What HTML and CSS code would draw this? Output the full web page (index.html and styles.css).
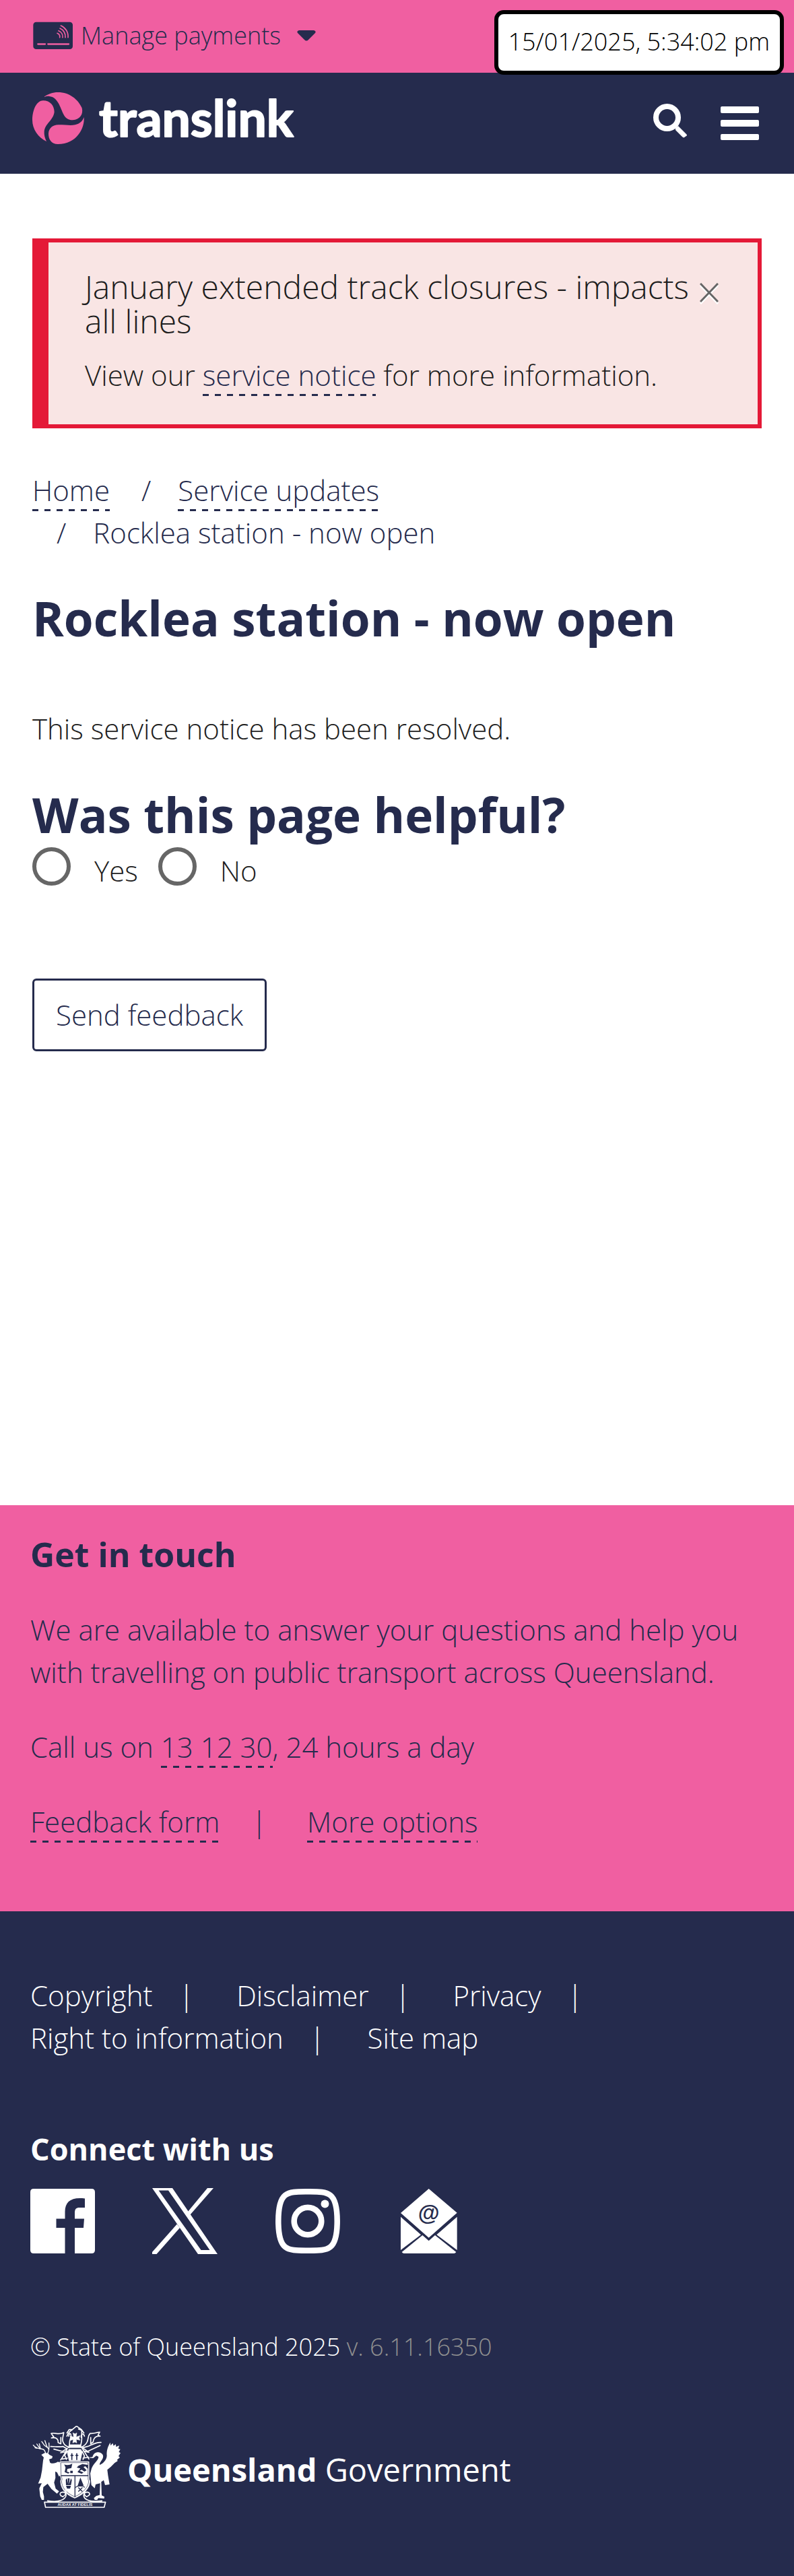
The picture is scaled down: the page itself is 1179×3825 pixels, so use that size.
FILE: index.html
```
<!DOCTYPE html>
<html lang="en">
<head>
<meta charset="utf-8">
<meta name="viewport" content="width=device-width, initial-scale=1">
<title>Rocklea station - now open | Translink</title>
<link rel="stylesheet" href="styles.css">
</head>
<body>
<div class="topbar">
  <button class="payments" type="button">
    <svg width="60" height="42" viewBox="24 28 180 122" aria-hidden="true">
      <rect class="navy" x="28" y="28" width="176" height="121" rx="13"/>
      <g class="pink-line" stroke-width="7"><path d="M49 126.500H81M94 126.500H186"/></g>
      <g class="pink-line" stroke-width="5">
        <path d="M151 44C172 53 185 73 183 97M147 56C163 63 173 79 171 97M141 67C153 72 161 84 159 97M135 78C142 81 148 88 146 97"/>
      </g>
    </svg>
    <span>Manage payments</span>
    <svg class="caret" width="28" height="16" viewBox="0 0 28 16" aria-hidden="true">
      <path class="navy" d="M3 0H25Q29 1 27 4L17 14Q14 17 11 14L1 4Q-1 1 3 0Z"/>
    </svg>
  </button>
</div>
<time class="stamp" datetime="2025-01-15T17:34:02">15/01/2025, 5:34:02 pm</time>

<header class="header">
  <a class="logo" href="#" aria-label="Translink home">
    <svg width="400" height="82" viewBox="0 0 400 82">
      <g class="pink" transform="scale(.3333) translate(-24 -20)">
        <path d="M78 39C95 28 115 20 138 20C190 20 228 52 245 90C252 118 236 143 204 144C184 144 170 133 163 118C148 88 138 42 100 38C92 37 84 38 78 41Z"/>
        <path d="M72 57C104 57 122 80 122 108C118 145 80 160 77 195C76 210 80 225 87 239C50 222 24 185 24 143C25 95 45 57 72 57Z"/>
        <path d="M254 131C258 180 222 251 138 251C108 251 96 228 96 205C97 180 115 165 140 165C175 165 195 170 215 165C235 160 248 148 254 131Z"/>
      </g>
      <text class="wordmark" x="99" y="66">translink</text>
    </svg>
  </a>
  <div class="tools">
    <button class="icon-button" type="button" aria-label="Search">
      <svg width="52" height="58" viewBox="0 0 52 58">
        <circle cx="20.500" cy="20.500" r="16.500" fill="none" stroke="#fff" stroke-width="8"/>
        <path d="M37 33L49 45Q51 47 49 48L46 50Q45 51 43 49L33 39V36Z" fill="#fff"/>
      </svg>
    </button>
    <button class="icon-button" type="button" aria-label="Menu">
      <svg width="58" height="58" viewBox="0 0 58 58" fill="#fff">
        <rect x="1" y="4" width="57" height="10" rx="2"/>
        <rect x="1" y="24" width="57" height="10" rx="2"/>
        <rect x="1" y="45" width="57" height="9" rx="2"/>
      </svg>
    </button>
  </div>
</header>

<main class="main">
  <section class="alert">
    <div class="alert-text">
      <h2 class="alert-title">January extended track closures - impacts all lines</h2>
      <p>View our <a class="link" href="#">service notice</a> for more information.</p>
    </div>
    <button class="close" type="button" aria-label="Close">
      <svg width="28" height="32" viewBox="0 0 28 32" fill="none" stroke-width="3">
        <path d="M1 4L27 31M27 4L1 31" stroke="#fff"/>
        <path d="M1 1L27 28M27 1L1 28" stroke="#666"/>
      </svg>
    </button>
  </section>

  <nav aria-label="Breadcrumb">
    <ol class="crumbs">
      <li><a class="link" href="#">Home</a></li>
      <li><a class="link" href="#">Service updates</a></li>
      <li>Rocklea station - now open</li>
    </ol>
  </nav>

  <h1 class="title">Rocklea station - now open</h1>
  <p class="notice">This service notice has been resolved.</p>

  <form>
    <h2 class="title" id="helpful">Was this page helpful?</h2>
    <div class="choices" role="radiogroup" aria-labelledby="helpful">
      <input type="radio" name="helpful" id="yes"><label for="yes">Yes</label>
      <input type="radio" name="helpful" id="no"><label for="no">No</label>
    </div>
    <button class="send" type="button">Send feedback</button>
  </form>
</main>

<footer>
  <section class="contact">
    <h3 class="contact-title">Get in touch</h3>
    <p>We are available to answer your questions and help you with travelling on public transport across Queensland.</p>
    <p>Call us on <a class="link" href="#">13 12 30</a>, 24 hours a day</p>
    <ul class="contact-links">
      <li><a class="link" href="#">Feedback form</a></li>
      <li><a class="link" href="#">More options</a></li>
    </ul>
  </section>
  <section class="legal">
    <ul class="legal-links">
      <li><a href="#">Copyright</a></li>
      <li><a href="#">Disclaimer</a></li>
      <li><a href="#">Privacy</a></li>
      <li><a href="#">Right to information</a></li>
      <li><a href="#">Site map</a></li>
    </ul>
    <h3 class="connect-title">Connect with us</h3>
    <div class="social">
      <a href="#" aria-label="Facebook">
        <svg width="96" height="98" viewBox="0 -1 96 98" fill="#fff">
          <path d="M5 0H91Q96 0 96 5V91Q96 96 91 96H66V58H79L80 44.500H66V36C66 30 68 28 73 28H81V14.500C61 12 51.500 19 51.500 34V44.500H38.500V58H51.500V96H5Q0 96 0 91V5Q0 0 5 0Z"/>
        </svg>
      </a>
      <a href="#" aria-label="X">
        <svg width="98" height="98" viewBox="0 0 98 98" fill="#fff">
          <path fill-rule="evenodd" d="M0 0H30L97 98H68ZM9.600 3.500H24L85.500 92H72.500Z"/>
          <path d="M82 0H91L56 40L53 35ZM36.800 53.500L41 59L6.500 98H0V95Z"/>
        </svg>
      </a>
      <a href="#" aria-label="Instagram">
        <svg width="96" height="98" viewBox="0 -1 96 98" fill="none" stroke="#fff" stroke-width="8.500">
          <path d="M48 4.300C78 4.300 91.700 3 91.700 48C91.700 93 78 91.700 48 91.700C18 91.700 4.300 93 4.300 48C4.300 3 18 4.300 48 4.300Z"/>
          <circle cx="48" cy="48" r="20.300"/>
          <circle cx="73.500" cy="22.500" r="6" fill="#fff" stroke="none"/>
        </svg>
      </a>
      <a href="#" aria-label="Email">
        <svg width="96" height="98" viewBox="0 27 288 294" fill="#fff">
          <path d="M140 30L266 137L140 248L15 138ZM15 155L105 235L15 303ZM266 155V303L175 235ZM20 312L112 237L140 262L168 237L262 312Q258 318 252 318H30Q24 318 20 312Z"/>
          <text class="at" x="140" y="170">@</text>
        </svg>
      </a>
    </div>
    <p class="copyright">© State of Queensland 2025 <span>v. 6.11.16350</span></p>
    <a class="gov" href="#">
      <svg width="135" height="123" viewBox="15 36 405 369" fill="none" stroke="#fff" stroke-width="4" stroke-linejoin="round" stroke-linecap="round" aria-hidden="true">
        <path fill="#fff" stroke="none" d="M76 158C84 155 96 157 100 165L114 172L112 181L99 185L103 200C112 206 128 204 138 196L148 200L152 252L143 262L134 243L126 240L127 268L121 289L128 316L143 328L134 338L109 317L92 294L73 309L71 331L76 350V366H66L59 350L55 315L66 292L50 293L61 266L67 235L72 190L75 177L64 165Z"/>
        <path d="M84 160C78 142 77 140 58 138C44 136 34 130 28 122M58 138L44 117M60 138L55 116M45 136L36 134M92 160C100 144 100 132 98 112M98 142L88 126M90 132L77 122L66 106M88 126L80 102"/>
        <path fill="#fff" stroke="none" d="M292 175C296 160 305 153 320 154C336 157 343 168 338 180C332 194 323 200 324 210C337 205 354 190 356 170C354 145 360 130 371 110L373 124L382 113L386 125L396 118L397 130L411 124L407 138L416 140L409 153L417 157L408 171L414 177L402 187L404 193L391 201L374 218L358 232L361 256L368 297L348 300L342 278L331 286L333 346L345 352L344 360L318 358L313 366H302L298 358L309 348L324 344L326 292L306 297L302 314L287 300L282 248L288 226C296 203 318 192 319 174L309 169L295 180L270 178Z"/>
        <path stroke-width="5" d="M108 70C125 65 142 78 164 66C162 82 156 94 160 106C165 120 172 125 188 132M108 70L120 86L109 90C130 85 140 95 139 111L151 116V88M324 64C310 65 302 72 281 70C270 82 275 95 268 108C262 120 255 127 240 132M324 64L316 79L326 82C306 80 297 90 295 108L284 116V88M330 110C310 108 294 118 276 126L248 134L270 150L326 124M106 128C126 128 140 132 161 128L178 138L158 150L120 140"/>
        <path stroke-width="5" d="M178 82C184 66 192 59 202 53L220 38M202 53L188 53L178 68M222 38L242 52L254 68M230 50L244 56L244 86M186 82C188 66 198 68 196 84C190 100 188 112 190 128M244 86C246 105 240 118 238 130M256 82C252 67 240 70 242 88"/>
        <path fill="#fff" stroke-width="2" d="M206 68L214 72L222 68L219 86L236 80L232 90L236 100L219 96L222 112L213 108L204 112L207 97L192 101L196 91L192 81L208 86ZM190 120H238L244 134H184ZM188 140H240L246 154L238 192H188L180 156Z"/>
        <path stroke-width="5" d="M180 136C170 158 160 175 150 188M182 148L168 166L176 186M246 136C258 154 266 168 276 184M246 150L256 170L250 186M150 156L178 150M276 154L252 148M158 184L180 180M250 180L274 176"/>
        <path stroke="#252b4d" stroke-width="5" stroke-linecap="butt" d="M200 158V188M194 168H207M222 158V188M216 168H229M190 137H240"/>
        <path fill="#fff" stroke-width="3" d="M148 196H276V252C278 265 274 275 280 280C281 311 258 340 213 358C166 340 150 311 150 280C156 272 148 262 148 252Z"/>
        <path stroke="#252b4d" stroke-width="2" d="M152 200H272V254C274 268 270 274 275 281C275 307 253 333 213 352C172 334 155 309 154 281C160 272 152 264 152 254Z"/>
        <path stroke="#252b4d" stroke-width="4" d="M153 258H272M214 258V352"/>
        <path fill="#252b4d" stroke="none" d="M166 208C176 212 190 212 202 205L198 224L180 228L178 240L190 244L184 249L168 242L172 222ZM193 236H204V247H193ZM230 214L247 206L272 210V228L260 216L252 220L266 234L256 240L244 232L234 236L252 244L244 250L225 242L238 226L222 222ZM173 276L178 270L184 296L182 270H190L188 296L196 270L200 278L196 300H174ZM174 303H196L192 316H179ZM238 266L253 303H226Z"/>
        <path stroke="#252b4d" stroke-width="4" d="M214 313C222 302 246 302 256 309M230 312L246 328M246 312L230 328"/>
        <path stroke-width="5" d="M92 370C124 375 154 372 167 359C180 346 174 331 159 331C148 332 144 340 151 347M151 347L160 352C172 344 178 334 172 324M334 370C300 375 272 373 258 359C248 346 254 331 268 331C280 332 283 342 274 347M274 347L266 352C254 344 252 334 258 326M78 376H350L344 399H83Z"/>
        <text class="motto" x="214" y="393">AUDAX AT FIDELIS</text>
      </svg>
      <span class="gov-name"><strong>Queensland</strong> Government</span>
    </a>
  </section>
</footer>
</body>
</html>
```
FILE: styles.css
```
:root {
  --pink: #f05fa1;
  --navy: #252b4d;
  --red: #e41937;
}

* {
  box-sizing: border-box;
}

body {
  margin: 0;
  background: #fff;
  color: #1e1e1e;
  font-family: "Open Sans", sans-serif;
  font-size: 42px;
  font-weight: 300;
  line-height: 63px;
}

h1, h2, h3, p, ul, ol {
  margin: 0;
  padding: 0;
}

ul, ol {
  list-style: none;
}

a {
  color: inherit;
  text-decoration: none;
}

button {
  margin: 0;
  padding: 0;
  border: 0;
  background: none;
  color: inherit;
  font: inherit;
}

svg {
  display: block;
  flex: none;
}

.navy { fill: var(--navy); }
.pink { fill: var(--pink); }

.pink-line {
  fill: none;
  stroke: var(--pink);
  stroke-linecap: round;
}

.link {
  padding-bottom: 3px;
  background: repeating-linear-gradient(90deg, var(--navy) 0 9px, transparent 9px 18px) left bottom / 100% 3px no-repeat;
  color: var(--navy);
}

/* Header */
.topbar {
  padding: 26px 48px 28px;
  background: var(--pink);
}

.payments {
  display: flex;
  align-items: center;
  gap: 12px;
  color: var(--navy);
  font-size: 36px;
  line-height: 54px;
}

.caret {
  margin-left: 12px;
}

.stamp {
  position: absolute;
  top: 15px;
  right: 15px;
  padding: 14px 15px 16px;
  border: 6px solid #000;
  border-radius: 14px;
  background: #fff;
  color: #000;
  font-size: 36px;
  line-height: 54px;
}

.header {
  display: flex;
  justify-content: space-between;
  padding: 29px 52px 39px 48px;
  background: var(--navy);
}

.wordmark {
  fill: #fff;
  stroke: #fff;
  stroke-width: 2px;
  stroke-linejoin: round;
  font-family: Lato, sans-serif;
  font-size: 75px;
  font-weight: 700;
}

.tools {
  display: flex;
  align-items: flex-start;
  gap: 47px;
  padding-top: 17px;
}

/* Page content */
.main {
  padding: 96px 48px 674px;
}

.alert {
  display: flex;
  align-items: flex-start;
  padding: 40px 58px 42px 54px;
  border: 6px solid var(--red);
  border-left-width: 24px;
  background: #f9e5e4;
}

.alert-text {
  flex: 1;
}

.alert-title {
  margin-bottom: 23px;
  font-size: 48px;
  font-weight: 300;
  line-height: 51px;
}

.close {
  padding-top: 20px;
}

.crumbs {
  display: flex;
  flex-wrap: wrap;
  column-gap: 11px;
  margin: 60px 0 54px;
  color: var(--navy);
}

.crumbs li + li::before {
  content: "/";
  margin: 0 40px 0 36px;
}

.title {
  color: var(--navy);
  font-size: 71px;
  font-weight: 700;
  line-height: 84px;
}

.notice {
  margin: 90px 0 55px;
}

.choices {
  display: flex;
  align-items: flex-start;
  margin: 6px 0 129px;
}

.choices input {
  appearance: none;
  width: 57px;
  height: 57px;
  margin: 0 35px 0 0;
  border: 6px solid #666;
  border-radius: 50%;
}

.choices input:checked {
  background: radial-gradient(circle, #666 40%, transparent 45%);
}

.choices label {
  margin-right: 30px;
  padding-top: 3px;
}

.send {
  height: 108px;
  padding: 0 32px 2px;
  border: 3px solid var(--navy);
  border-radius: 6px;
  color: var(--navy);
}

/* Footer */
.contact {
  padding: 42px 45px 102px;
  background: var(--pink);
  color: var(--navy);
}

.contact p {
  margin-bottom: 48px;
}

.contact-title {
  margin-bottom: 48px;
  font-size: 50px;
  font-weight: 700;
}

.contact-links,
.legal-links {
  display: flex;
  flex-wrap: wrap;
}

.contact-links li:not(:last-child)::after {
  content: "|";
  margin: 0 60px 0 47px;
}

.legal {
  padding: 93px 45px 101px;
  background: var(--navy);
  color: #fff;
}

.legal-links li:not(:last-child)::after {
  content: "|";
  margin: 0 63px 0 39px;
}

.connect-title {
  margin: 102px 0 27px;
  font-size: 45px;
  font-weight: 700;
}

.social {
  display: flex;
  gap: 85px;
}

.at {
  fill: var(--navy);
  font-family: "Liberation Sans", sans-serif;
  font-size: 98px;
  font-weight: 700;
  text-anchor: middle;
}

.copyright {
  margin: 111px 0 90px;
  font-size: 36px;
  line-height: 54px;
}

.copyright span {
  color: #909090;
}

.gov {
  display: flex;
  gap: 9px;
}

.gov-name {
  padding-top: 34px;
  font-size: 47px;
  font-weight: 400;
}

.gov-name strong {
  font-weight: 700;
}

.motto {
  fill: #fff;
  stroke: none;
  font-family: "Liberation Sans", sans-serif;
  font-size: 17px;
  font-weight: 700;
  text-anchor: middle;
}
```
